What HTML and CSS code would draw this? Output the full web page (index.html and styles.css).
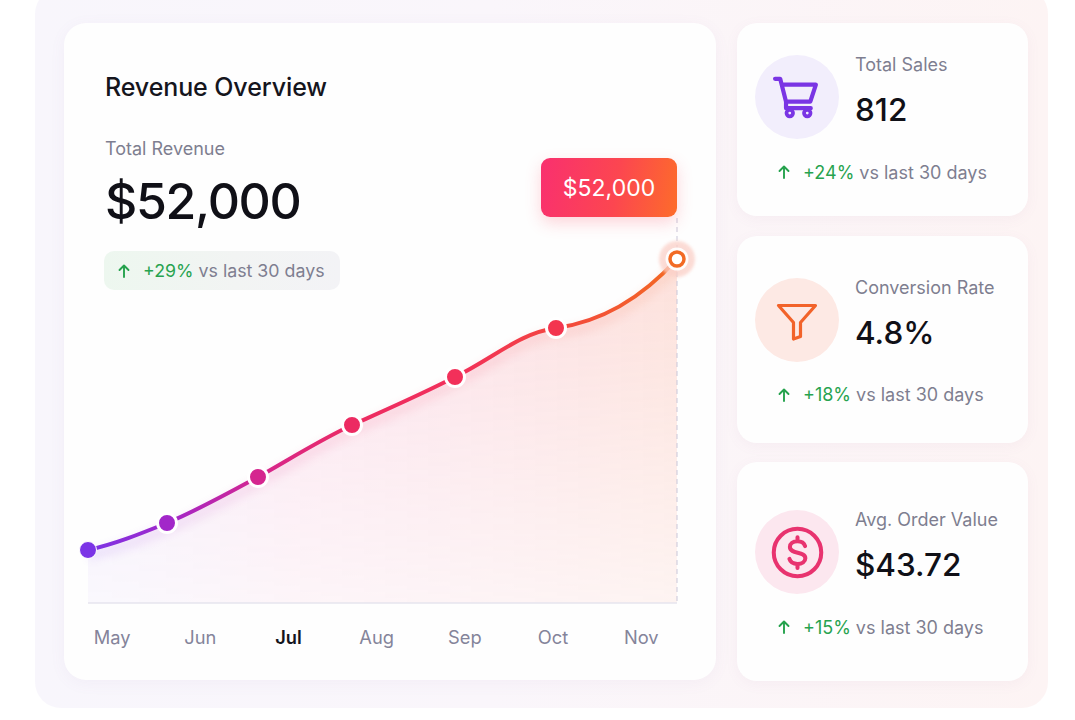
FILE: index.html
```html
<!DOCTYPE html>
<html lang="en">
<head>
<meta charset="utf-8">
<title>Revenue Overview</title>
<link rel="stylesheet" href="styles.css">
</head>
<body>
<div class="panel">
  <section class="main-card">
    <div class="stack">
      <div class="header">
        <h1 class="title">Revenue Overview</h1>
        <div class="sub">Total Revenue</div>
        <div class="big">$52,000</div>
        <div class="pill">
          <svg class="arrow" viewBox="0 0 12 14" width="12" height="14"><path d="M6 13V1.5M1.5 6L6 1.5 10.5 6" fill="none" stroke="#25a24d" stroke-width="1.9" stroke-linecap="round" stroke-linejoin="round"/></svg>
          <span class="up">+29%</span><span class="muted">vs last 30 days</span>
        </div>
      </div>
      <div class="chart">
        <svg class="chart-svg" viewBox="64 150 652 462" width="652" height="462">
          <defs>
            <linearGradient id="lineGrad" gradientUnits="userSpaceOnUse" x1="88" y1="0" x2="677" y2="0">
              <stop offset="0" stop-color="#7b34e6"/>
              <stop offset="0.14" stop-color="#a227c9"/>
              <stop offset="0.29" stop-color="#d5268f"/>
              <stop offset="0.45" stop-color="#ec2b62"/>
              <stop offset="0.63" stop-color="#f2305a"/>
              <stop offset="0.8" stop-color="#f3473f"/>
              <stop offset="1" stop-color="#f36b22"/>
            </linearGradient>
            <linearGradient id="areaGrad" gradientUnits="userSpaceOnUse" x1="88" y1="0" x2="677" y2="0">
              <stop offset="0" stop-color="#9b6cf0" stop-opacity="0.12"/>
              <stop offset="0.35" stop-color="#ee4f9a" stop-opacity="0.15"/>
              <stop offset="1" stop-color="#fa7a5e" stop-opacity="0.22"/>
            </linearGradient>
            <linearGradient id="fadeGrad" gradientUnits="userSpaceOnUse" x1="0" y1="260" x2="0" y2="603">
              <stop offset="0" stop-color="#fff" stop-opacity="1"/>
              <stop offset="1" stop-color="#fff" stop-opacity="0.35"/>
            </linearGradient>
            <mask id="fadeMask" maskUnits="userSpaceOnUse" x="64" y="150" width="652" height="462">
              <rect x="64" y="150" width="652" height="462" fill="url(#fadeGrad)"/>
            </mask>
            <filter id="blur" x="-20%" y="-20%" width="140%" height="140%">
              <feGaussianBlur stdDeviation="5"/>
            </filter>
            <filter id="halo" x="-50%" y="-50%" width="200%" height="200%">
              <feGaussianBlur stdDeviation="1.5"/>
            </filter>
          </defs>
          <path d="M88,550 C115,544 140,534 167,523 C198,510 225,495 258,477 C290,459 320,440 352,425 C390,408 420,395 455,377 C495,357 520,333 556,328 C600,322 640,300 677,259 L677,603 L88,603 Z" fill="url(#areaGrad)" mask="url(#fadeMask)"/>
          <path d="M88,556 C115,550 140,540 167,529 C198,516 225,501 258,483 C290,465 320,446 352,431 C390,414 420,401 455,383 C495,363 520,339 556,334 C600,328 640,306 677,265" fill="none" stroke="url(#lineGrad)" stroke-width="10" opacity="0.10" filter="url(#blur)"/>
          <line x1="88" y1="603" x2="677" y2="603" stroke="#e6e4ee" stroke-width="1.5"/>
          <line x1="677" y1="218" x2="677" y2="603" stroke="#c9c6d8" stroke-width="1" stroke-dasharray="5 4"/>
          <path d="M88,550 C115,544 140,534 167,523 C198,510 225,495 258,477 C290,459 320,440 352,425 C390,408 420,395 455,377 C495,357 520,333 556,328 C600,322 640,300 677,259" fill="none" stroke="url(#lineGrad)" stroke-width="4" stroke-linecap="round"/>
          <circle cx="88" cy="550" r="8.5" fill="#7b34e6" stroke="#fff" stroke-width="1"/>
          <circle cx="167" cy="523" r="9.5" fill="#a227c9" stroke="#fff" stroke-width="3"/>
          <circle cx="258" cy="477" r="9.5" fill="#d5268f" stroke="#fff" stroke-width="3"/>
          <circle cx="352" cy="425" r="9.5" fill="#ec2b62" stroke="#fff" stroke-width="3"/>
          <circle cx="455" cy="377" r="9.5" fill="#f2305a" stroke="#fff" stroke-width="3"/>
          <circle cx="556" cy="328" r="9.5" fill="#f3354f" stroke="#fff" stroke-width="3"/>
          <circle cx="677" cy="259" r="18" fill="#fbd0c8" opacity="0.75" filter="url(#halo)"/>
          <circle cx="677" cy="259" r="11.5" fill="#fff" opacity="0.9"/>
          <circle cx="677" cy="259" r="7" fill="#fff" stroke="#f26a24" stroke-width="3.5"/>
        </svg>
        <div class="tooltip">$52,000</div>
      </div>
    </div>
    <div class="months">
      <span>May</span><span>Jun</span><span class="current">Jul</span><span>Aug</span><span>Sep</span><span>Oct</span><span>Nov</span>
    </div>
  </section>

  <aside class="side">
    <div class="stat stat-sales">
      <div class="stat-top">
        <div class="icon icon-purple">
          <svg viewBox="0 0 24 24" width="56" height="56"><path d="M2.6 4.2h2.2l2.5 9.8h10.4l2.4-7.3H5.6M7.3 14v2.8h10.6" fill="none" stroke="#7a35e4" stroke-width="1.8" stroke-linecap="round" stroke-linejoin="round"/><circle cx="8.9" cy="18.9" r="1.4" fill="none" stroke="#7a35e4" stroke-width="1.6"/><circle cx="16.4" cy="18.9" r="1.4" fill="none" stroke="#7a35e4" stroke-width="1.6"/></svg>
        </div>
        <div class="stat-text">
          <div class="stat-label">Total Sales</div>
          <div class="stat-value">812</div>
        </div>
      </div>
      <div class="change">
        <svg class="arrow" viewBox="0 0 12 14" width="12" height="14"><path d="M6 13V1.5M1.5 6L6 1.5 10.5 6" fill="none" stroke="#25a24d" stroke-width="1.9" stroke-linecap="round" stroke-linejoin="round"/></svg>
        <span class="up">+24%</span><span class="muted">vs last 30 days</span>
      </div>
    </div>

    <div class="stat stat-conv">
      <div class="stat-top">
        <div class="icon icon-orange">
          <svg viewBox="0 0 44 44" width="44" height="44"><path d="M3.5 7.5H40.5L25.5 24.5V38.5L18.5 41V24.5Z" fill="none" stroke="#f2632a" stroke-width="3.2" stroke-linejoin="round"/></svg>
        </div>
        <div class="stat-text">
          <div class="stat-label">Conversion Rate</div>
          <div class="stat-value">4.8%</div>
        </div>
      </div>
      <div class="change">
        <svg class="arrow" viewBox="0 0 12 14" width="12" height="14"><path d="M6 13V1.5M1.5 6L6 1.5 10.5 6" fill="none" stroke="#25a24d" stroke-width="1.9" stroke-linecap="round" stroke-linejoin="round"/></svg>
        <span class="up">+18%</span><span class="muted">vs last 30 days</span>
      </div>
    </div>

    <div class="stat stat-aov">
      <div class="stat-top">
        <div class="icon icon-pink">
          <svg viewBox="0 0 24 24" width="57" height="57"><circle cx="12" cy="12" r="10" fill="none" stroke="#e8336f" stroke-width="1.7"/><path d="M15.2 9.3c-.4-1.2-1.7-2-3.2-2-1.9 0-3.2 1-3.2 2.4 0 3.2 6.5 1.6 6.5 4.7 0 1.4-1.4 2.4-3.3 2.4-1.7 0-3-.8-3.4-2.1M12 5.6v1.7M12 16.8v1.7" fill="none" stroke="#e8336f" stroke-width="1.7" stroke-linecap="round" stroke-linejoin="round"/></svg>
        </div>
        <div class="stat-text">
          <div class="stat-label">Avg. Order Value</div>
          <div class="stat-value">$43.72</div>
        </div>
      </div>
      <div class="change">
        <svg class="arrow" viewBox="0 0 12 14" width="12" height="14"><path d="M6 13V1.5M1.5 6L6 1.5 10.5 6" fill="none" stroke="#25a24d" stroke-width="1.9" stroke-linecap="round" stroke-linejoin="round"/></svg>
        <span class="up">+15%</span><span class="muted">vs last 30 days</span>
      </div>
    </div>
  </aside>
</div>
</body>
</html>
```

FILE: styles.css
```css
* { box-sizing: border-box; }

html, body {
  margin: 0;
  padding: 0;
  background: #ffffff;
  font-family: Inter, "Noto Sans", "Liberation Sans", sans-serif;
  color: #14141c;
  overflow: hidden;
}

.panel {
  width: 1013px;
  height: 720px;
  margin: -12px 0 0 35px;
  padding: 35px 20px 27px 29px;
  border-radius: 26px;
  background: linear-gradient(90deg, #f8f6fc 0%, #faf6fb 45%, #fdf4f4 100%);
  display: flex;
  gap: 21px;
}

.main-card {
  width: 652px;
  height: 657px;
  background: #fefefe;
  border-radius: 22px;
  box-shadow: 0 3px 16px rgba(140, 110, 170, 0.06);
  display: flex;
  flex-direction: column;
}

.stack {
  display: grid;
}

.header,
.chart {
  grid-area: 1 / 1;
}

.header {
  padding: 49px 41px 0;
  position: relative;
  z-index: 1;
}

.title {
  margin: 0;
  font-size: 25px;
  line-height: 30px;
  font-weight: 500;
  letter-spacing: -0.1px;
  color: #15151d;
}

.sub {
  margin-top: 35px;
  font-size: 18px;
  line-height: 24px;
  color: #7e7e90;
}

.big {
  margin-top: 10px;
  font-size: 50px;
  line-height: 60px;
  font-weight: 500;
  letter-spacing: -1.3px;
  color: #101017;
}

.pill {
  margin-top: 20px;
  width: 236px;
  height: 39px;
  margin-left: -1px;
  padding-left: 14px;
  border-radius: 10px;
  background: linear-gradient(90deg, #edf7ef 0%, #f2f4f3 55%, #f3f3f6 100%);
  display: flex;
  align-items: center;
  font-size: 17.8px;
}

.arrow {
  flex: none;
  margin-right: 13px;
}

.up {
  color: #27a34f;
  margin-right: 5px;
}

.muted {
  color: #7e7e90;
}

.chart {
  margin-top: 127px;
  height: 462px;
  position: relative;
}

.chart-svg {
  display: block;
}

.tooltip {
  position: absolute;
  left: 477px;
  top: 8px;
  width: 136px;
  height: 59px;
  border-radius: 9px;
  background: linear-gradient(100deg, #f9306f 0%, #fc4650 55%, #fd6c2a 100%);
  box-shadow: 0 6px 16px rgba(250, 70, 90, 0.22);
  color: #fff;
  font-size: 23px;
  display: flex;
  align-items: center;
  justify-content: center;
  z-index: 2;
}

.months {
  margin-top: 13px;
  padding-left: 4px;
  display: grid;
  grid-template-columns: repeat(7, 88.2px);
  font-size: 18.3px;
  line-height: 24px;
  color: #84849a;
}

.months span {
  text-align: center;
}

.months .current {
  color: #15151d;
  font-weight: 600;
}

.side {
  width: 291px;
  height: 658px;
  display: flex;
  flex-direction: column;
  gap: 19.5px;
}

.stat {
  background: #fefefe;
  border-radius: 20px;
  box-shadow: 0 3px 14px rgba(160, 110, 150, 0.06);
  padding: 0 18px;
  display: flex;
  flex-direction: column;
  justify-content: center;
}

.stat-sales { height: 193px; }
.stat-conv { height: 207px; padding-top: 6px; }
.stat-aov { height: 219px; padding-top: 6px; }

.stat-top {
  display: flex;
  align-items: flex-start;
  gap: 16px;
}

.icon {
  width: 84px;
  height: 84px;
  border-radius: 50%;
  flex: none;
  display: flex;
  align-items: center;
  justify-content: center;
}

.icon-purple { background: #f2eefc; }
.icon-orange { background: #fde9e4; }
.icon-pink { background: #fce7ef; }

.stat-text {
  margin-top: -1px;
}

.stat-label {
  font-size: 18px;
  line-height: 22px;
  color: #7e7e90;
}

.stat-value {
  margin-top: 15px;
  font-size: 31.5px;
  line-height: 38px;
  font-weight: 500;
  color: #101017;
}

.change {
  margin-top: 21px;
  padding-left: 23px;
  display: flex;
  align-items: center;
  height: 24px;
  font-size: 18px;
}
```
